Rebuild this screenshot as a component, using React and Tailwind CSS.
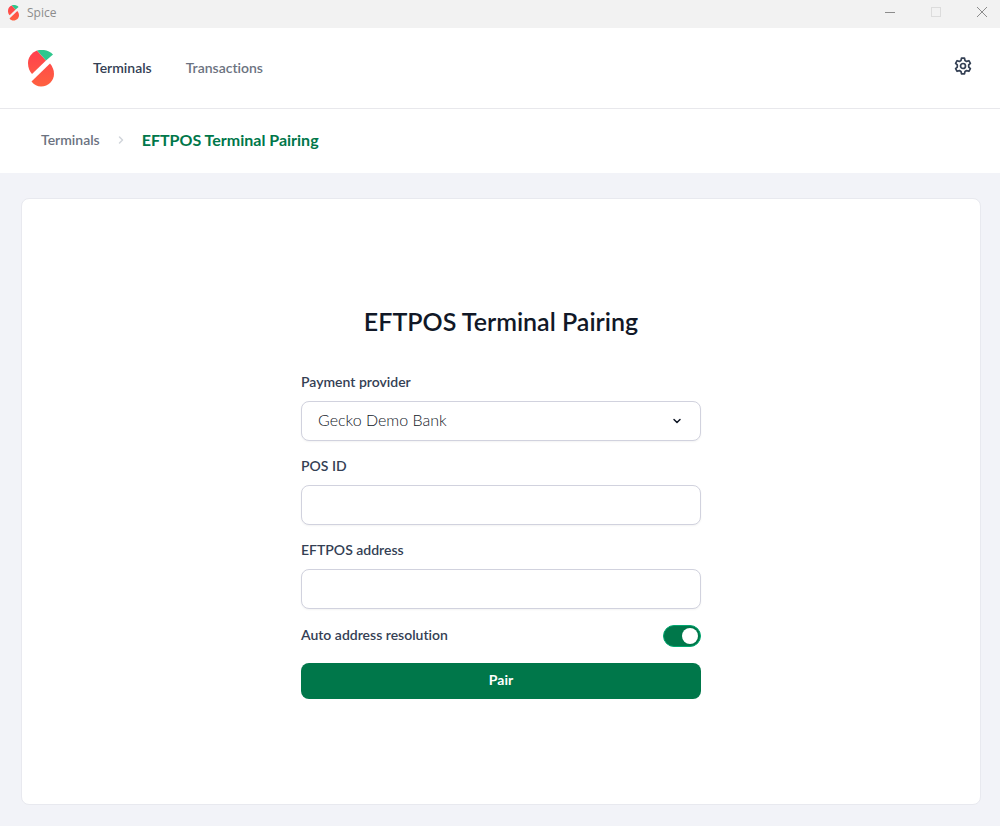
import { useState } from 'react'
import { ChevronDown, ChevronRight } from 'lucide-react'

function Logo({ className }) {
  return (
    <svg viewBox="0 0 26 37" className={className} aria-hidden="true">
      <defs>
        <linearGradient id="spice-red" x1="0" y1="0" x2="0" y2="37" gradientUnits="userSpaceOnUse">
          <stop offset="0" stopColor="#ff404e" />
          <stop offset="1" stopColor="#ff613f" />
        </linearGradient>
      </defs>
      <path d="M9 0.500C3.500 2.500 0 7.500 0 13C0 17.500 1.500 21.500 4 24L18 10.500Z" fill="url(#spice-red)" />
      <path d="M9 0.500C14-1 21 0 25 4.500L18 10.500Z" fill="#2fc78d" />
      <path d="M22 13.500L3.500 31.500C6 35 9.500 36.500 13 36.500C20.500 36.500 26 30.500 26 24C26 20 24.500 16.500 22 13.500Z" fill="url(#spice-red)" />
    </svg>
  )
}

function GearIcon({ className }) {
  return (
    <svg viewBox="0 0 18 18" className={className} fill="none" stroke="currentColor" strokeWidth="1.700" strokeLinejoin="round" aria-hidden="true">
      <path d="M7.500 1.200H10.500L11 3.500L12.600 4.400L14.900 3.700L16.400 6.300L14.700 7.900V10.100L16.400 11.700L14.900 14.300L12.600 13.600L11 14.500L10.500 16.800H7.500L7 14.500L5.400 13.600L3.100 14.300L1.600 11.700L3.300 10.100V7.900L1.600 6.300L3.100 3.700L5.400 4.400L7 3.500Z" />
      <circle cx="9" cy="9" r="2.500" />
    </svg>
  )
}

function TitleBar() {
  return (
    <div className="flex h-7 items-center justify-between bg-[#f2f2f2] text-[#8c8c8c]">
      <div className="flex items-center gap-2 pb-0.5 pl-2">
        <Logo className="h-4 w-[11px]" />
        <span className="font-['Open_Sans',sans-serif] text-xs">Spice</span>
      </div>
      <div className="flex gap-[34px] pr-3 pb-1">
        <button type="button" aria-label="Minimize">
          <svg viewBox="0 0 12 12" className="size-3" stroke="#8c8c8c" fill="none"><path d="M1 6.500H11" /></svg>
        </button>
        <button type="button" aria-label="Maximize" disabled>
          <svg viewBox="0 0 12 12" className="size-3" stroke="#dcdcdc" fill="none"><rect x="1.500" y="1.500" width="9" height="9" /></svg>
        </button>
        <button type="button" aria-label="Close">
          <svg viewBox="0 0 12 12" className="size-3" stroke="#8c8c8c" fill="none"><path d="M1 1L11 11M11 1L1 11" /></svg>
        </button>
      </div>
    </div>
  )
}

function Field({ id, label, children }) {
  return (
    <div className="flex flex-col gap-[10px]">
      <label htmlFor={id} className="text-sm/[18px] font-semibold text-[#344054]">{label}</label>
      {children}
    </div>
  )
}

const inputClass = 'h-10 w-full rounded-lg border border-[#d1d2de] bg-white px-4 text-base text-[#111827] shadow-xs'

export default function App() {
  const [autoAddress, setAutoAddress] = useState(true)

  return (
    <div className="flex min-h-screen flex-col bg-[#f2f3f8] font-['Lato',sans-serif] [font-variant-ligatures:none]">
      <TitleBar />

      <header className="flex h-[81px] items-center justify-between border-b border-[#e8e8ec] bg-white px-7">
        <div className="flex items-center">
          <Logo className="h-[37px] w-[26px]" />
          <nav className="ml-[39px] flex gap-[34px] text-sm font-semibold">
            <a href="#terminals" className="text-[#344054]">Terminals</a>
            <a href="#transactions" className="text-[#6b7280]">Transactions</a>
          </nav>
        </div>
        <button type="button" aria-label="Settings" className="pb-1 text-[#344054]">
          <GearIcon className="size-[18px]" />
        </button>
      </header>

      <nav aria-label="Breadcrumb" className="flex h-16 items-center gap-[15px] bg-white pb-0.5 pl-[41px]">
        <a href="#terminals" className="text-sm font-semibold text-[#6b7280]">Terminals</a>
        <ChevronRight className="size-3 text-[#d1d5db]" strokeWidth={3} />
        <span className="text-base font-bold text-[#00774a]">EFTPOS Terminal Pairing</span>
      </nav>

      <main className="flex flex-1 pt-[25px] pr-[19px] pb-[21px] pl-[21px]">
        <section className="flex flex-1 flex-col items-center justify-center rounded-lg border border-[#e8e9ef] bg-white">
          <h1 className="text-[25px]/8 font-semibold text-[#111827]">EFTPOS Terminal Pairing</h1>

          <form className="mt-9 flex w-full max-w-[400px] flex-col gap-4" onSubmit={(e) => e.preventDefault()}>
            <Field id="provider" label="Payment provider">
              <div className="relative">
                <select id="provider" className={`${inputClass} appearance-none pb-0.5 font-light`}>
                  <option>Gecko Demo Bank</option>
                </select>
                <ChevronDown className="pointer-events-none absolute top-[14px] right-[18px] size-3 text-[#111827]" strokeWidth={3} />
              </div>
            </Field>
            <Field id="pos-id" label="POS ID">
              <input id="pos-id" type="text" className={inputClass} />
            </Field>
            <Field id="address" label="EFTPOS address">
              <input id="address" type="text" className={inputClass} />
            </Field>

            <div className="flex items-center justify-between">
              <label htmlFor="auto-address" className="pb-0.5 text-sm font-semibold text-[#344054]">Auto address resolution</label>
              <input
                id="auto-address"
                type="checkbox"
                role="switch"
                checked={autoAddress}
                onChange={(e) => setAutoAddress(e.target.checked)}
                className="flex h-[22px] w-[38px] appearance-none items-center rounded-full border border-[#00a870] bg-gray-300 px-[2px] before:size-4 before:rounded-full before:bg-white checked:justify-end checked:bg-[#00774a]"
              />
            </div>

            <button type="submit" className="h-9 rounded-lg bg-[#00774a] pb-0.5 text-sm font-bold text-white">Pair</button>
          </form>
        </section>
      </main>
    </div>
  )
}
